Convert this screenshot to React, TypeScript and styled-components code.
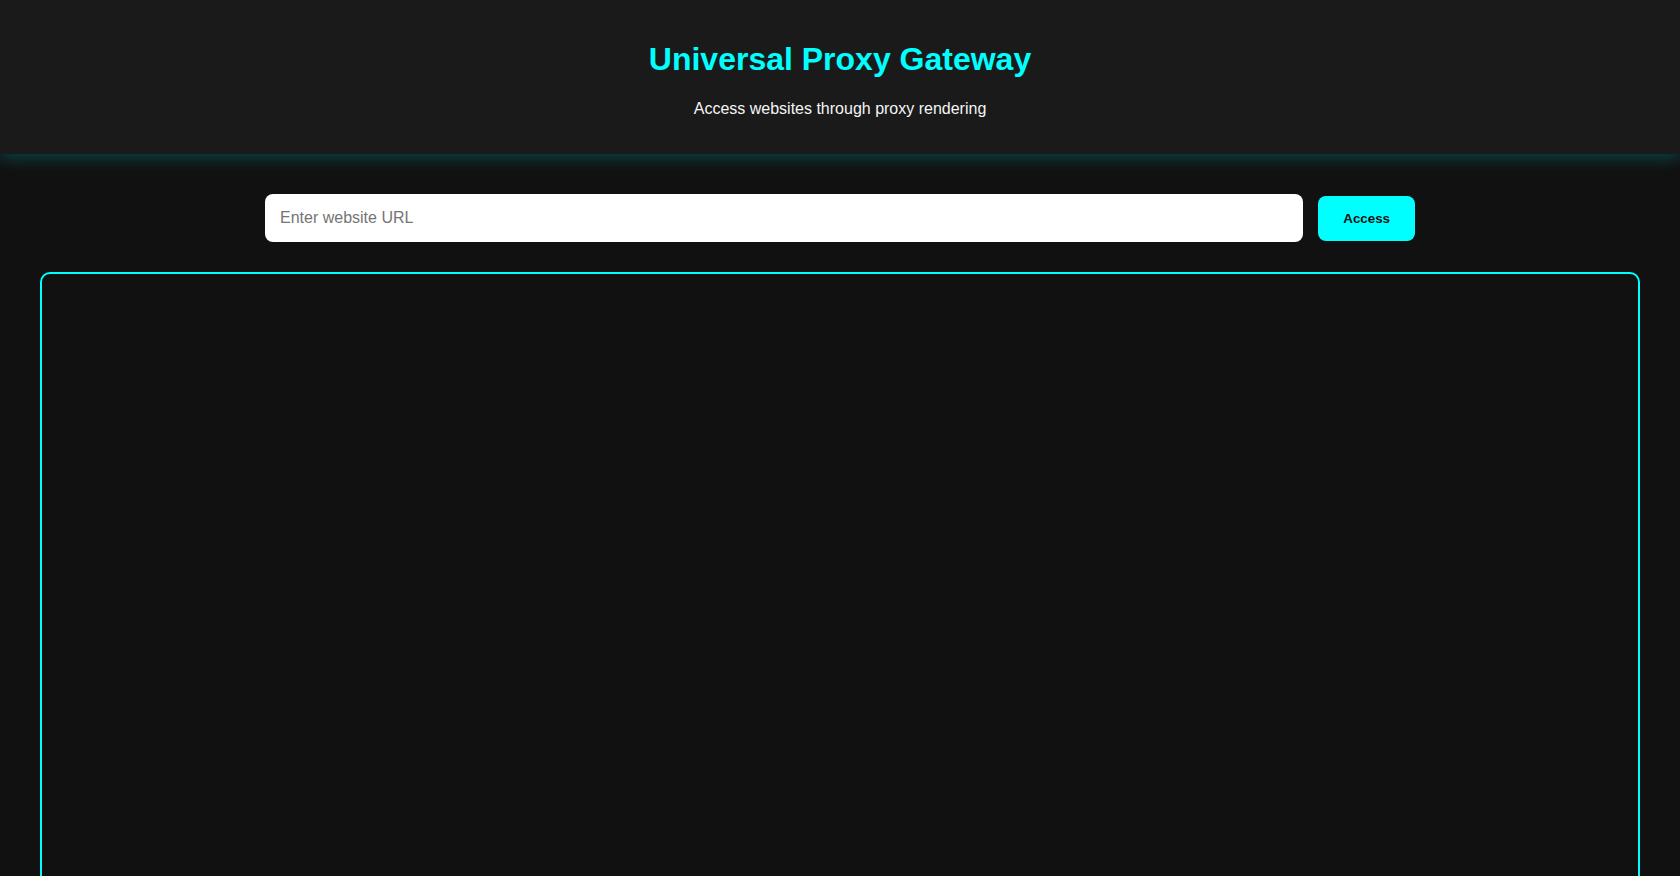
import { useState } from 'react';
import styled, { createGlobalStyle } from 'styled-components';

const GlobalStyle = createGlobalStyle`
  body {
    margin: 0;
    background: #111111;
    color: #ffffff;
    font-family: "Liberation Sans", Arial, sans-serif;
  }
`;

const Header = styled.header`
  background: #1a1a1a;
  padding: 20px;
  text-align: center;
  box-shadow: 0 4px 15px rgba(0, 255, 255, 0.22);
  position: relative;
`;

const Title = styled.h1`
  color: #00ffff;
  font-size: 32px;
  margin: 21.44px 0;
`;

const Subtitle = styled.p`
  color: #f5f5f5;
  font-size: 16px;
  margin: 16px 0;
`;

const Main = styled.main`
  padding: 40px 40px 0;
`;

const UrlBar = styled.form`
  display: flex;
  align-items: center;
  gap: 15px;
  max-width: 1150px;
  margin: 0 auto 30px;
`;

const UrlInput = styled.input`
  flex: 1;
  padding: 15px;
  font-size: 16px;
  font-family: "Liberation Sans", Arial, sans-serif;
  border: none;
  border-radius: 8px;
  background: #ffffff;
  color: #111111;
  &::placeholder {
    color: #757575;
  }
  &:focus {
    outline: none;
  }
`;

const AccessButton = styled.button`
  padding: 15px 25px;
  margin-top: 1px;
  background: #00ffff;
  color: #111111;
  border: none;
  border-radius: 8px;
  font-family: "Liberation Sans", Arial, sans-serif;
  font-size: 13.33px;
  font-weight: bold;
  cursor: pointer;
`;

const Frame = styled.iframe`
  display: block;
  box-sizing: border-box;
  width: 100%;
  height: 80vh;
  border: 2px solid #00ffff;
  border-radius: 10px;
  background: #111111;
`;

function App() {
  const [url, setUrl] = useState('');
  const [src, setSrc] = useState('');

  const handleSubmit = (e: any) => {
    e.preventDefault();
    if (url) setSrc(url);
  };

  return (
    <>
      <GlobalStyle />
      <Header>
        <Title>Universal Proxy Gateway</Title>
        <Subtitle>Access websites through proxy rendering</Subtitle>
      </Header>
      <Main>
        <UrlBar onSubmit={handleSubmit}>
          <UrlInput
            type="text"
            placeholder="Enter website URL"
            value={url}
            onChange={(e) => setUrl(e.target.value)}
          />
          <AccessButton type="submit">Access</AccessButton>
        </UrlBar>
        <Frame title="proxy" src={src || undefined} />
      </Main>
    </>
  );
}

export default App;
